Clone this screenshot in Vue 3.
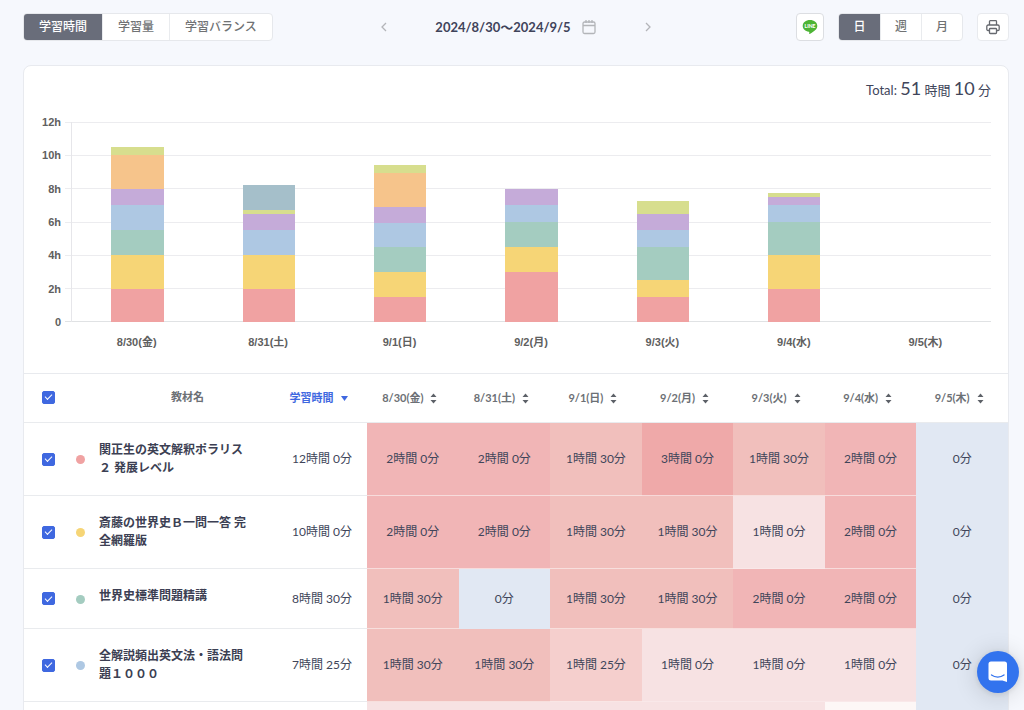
<script setup>
import { ref, computed } from 'vue'

const tabs = ['学習時間', '学習量', '学習バランス']
const periods = ['日', '週', '月']
const activeTab = ref('学習時間')
const activePeriod = ref('日')

const days = ['8/30(金)', '8/31(土)', '9/1(日)', '9/2(月)', '9/3(火)', '9/4(水)', '9/5(木)']
const ticks = ['12h', '10h', '8h', '6h', '4h', '2h', '0']
const maxMinutes = 720

const colors = ['red', 'yellow', 'green', 'blue', 'purple', 'orange', 'lime', 'teal']
const stacks = [
  [120, 120, 90, 90, 60, 120, 30, 0],
  [120, 120, 0, 90, 60, 0, 15, 90],
  [90, 90, 90, 85, 60, 120, 30, 0],
  [180, 90, 90, 60, 60, 0, 0, 0],
  [90, 60, 120, 60, 60, 0, 45, 0],
  [120, 120, 120, 60, 30, 0, 15, 0],
  [0, 0, 0, 0, 0, 0, 0, 0],
]

const bars = computed(() =>
  stacks.map((stack) =>
    stack
      .map((minutes, i) => ({ color: colors[i], height: (minutes / maxMinutes) * 100 + '%' }))
      .filter((_, i) => stack[i] > 0)
      .reverse(),
  ),
)

const allChecked = ref(true)
const rows = ref([
  { name: '関正生の英文解釈ポラリス２ 発展レベル', color: 'red', total: 720, cells: [120, 120, 90, 180, 90, 120, 0], checked: true },
  { name: '斎藤の世界史Ｂ一問一答 完全網羅版', color: 'yellow', total: 600, cells: [120, 120, 90, 90, 60, 120, 0], checked: true },
  { name: '世界史標準問題精講', color: 'green', total: 510, cells: [90, 0, 90, 90, 120, 120, 0], checked: true },
  { name: '全解説頻出英文法・語法問題１０００', color: 'blue', total: 445, cells: [90, 90, 85, 60, 60, 60, 0], checked: true },
])
const nextCells = [60, 60, 60, 60, 60, 30, 0]

function format(minutes) {
  const h = Math.floor(minutes / 60)
  const m = minutes % 60
  return h ? `${h}時間 ${m}分` : `${m}分`
}

function toggleAll() {
  rows.value.forEach((row) => (row.checked = allChecked.value))
}
</script>

<template>
  <div class="page">
    <header class="toolbar">
      <div class="segment">
        <button
          v-for="tab in tabs"
          :key="tab"
          type="button"
          :class="{ active: tab === activeTab }"
          @click="activeTab = tab"
        >{{ tab }}</button>
      </div>

      <div class="range">
        <button type="button" class="plain" aria-label="前の期間">
          <svg width="16" height="16" viewBox="0 0 16 16"><path d="M10 4 6 8l4 4" /></svg>
        </button>
        <button type="button" class="plain dates">
          <span>2024/8/30〜2024/9/5</span>
          <svg width="16" height="16" viewBox="0 0 16 16">
            <rect x="2" y="3" width="12" height="11.500" rx="1.500" />
            <path d="M2 6.500h12M5 1v3M11 1v3M8 1v3" />
          </svg>
        </button>
        <button type="button" class="plain" aria-label="次の期間">
          <svg width="16" height="16" viewBox="0 0 16 16"><path d="m6 4 4 4-4 4" /></svg>
        </button>
      </div>

      <div class="actions">
        <button type="button" class="icon-button line" aria-label="LINE">
          <svg width="16" height="16" viewBox="0 0 16 16">
            <path d="M8 1C3.900 1 .7 3.600.7 6.900c0 2.900 2.600 5.300 6.100 5.800.5.1.6.4.5.9l-.1 1c0 .4.2.5.6.3 1.900-1 4.900-2.900 6.300-4.600.8-1 1.200-2.100 1.200-3.400C15.300 3.600 12.100 1 8 1z" fill="#4db435" />
            <text x="8" y="8.500" text-anchor="middle">LINE</text>
          </svg>
        </button>
        <div class="segment periods">
          <button
            v-for="period in periods"
            :key="period"
            type="button"
            :class="{ active: period === activePeriod }"
            @click="activePeriod = period"
          >{{ period }}</button>
        </div>
        <button type="button" class="icon-button print" aria-label="印刷">
          <svg width="16" height="16" viewBox="0 0 16 16">
            <path d="M4.500 6V2.500c0-.5.300-.8.800-.8h5.400c.5 0 .8.300.8.800V6M4 11.500H3c-.7 0-1.200-.5-1.200-1.200V7.500C1.800 6.700 2.400 6 3.200 6h9.600c.8 0 1.400.7 1.400 1.500v2.800c0 .7-.5 1.200-1.200 1.200h-1" />
            <rect x="4.500" y="9.500" width="7" height="5" rx=".8" />
          </svg>
        </button>
      </div>
    </header>

    <main class="card">
      <p class="total">Total: <b>51</b> 時間 <b>10</b> 分</p>

      <section class="chart">
        <div class="axis">
          <span v-for="tick in ticks" :key="tick">{{ tick }}</span>
        </div>
        <div class="plot">
          <div class="grid-lines"><i v-for="n in 6" :key="n"></i></div>
          <div class="bars">
            <div v-for="(bar, i) in bars" :key="i" class="bar">
              <div
                v-for="part in bar"
                :key="part.color"
                :class="['part', part.color]"
                :style="{ height: part.height }"
              ></div>
            </div>
          </div>
        </div>
        <div class="labels">
          <span v-for="day in days" :key="day">{{ day }}</span>
        </div>
      </section>

      <table>
        <colgroup>
          <col class="col-check" /><col class="col-dot" /><col class="col-name" /><col class="col-time" />
          <col v-for="day in days" :key="day" />
        </colgroup>
        <thead>
          <tr>
            <th><input v-model="allChecked" type="checkbox" aria-label="すべて選択" @change="toggleAll" /></th>
            <th></th>
            <th class="name-head">教材名</th>
            <th>
              <button type="button" class="sort current">
                学習時間
                <svg width="9" height="12" viewBox="0 0 9 12"><path d="M1 4h7L4.500 9z" /></svg>
              </button>
            </th>
            <th v-for="day in days" :key="day">
              <button type="button" class="sort">
                {{ day }}
                <svg width="7" height="12" viewBox="0 0 7 12"><path d="M.5 5h6L3.500 1.500zM.5 8h6l-3 3.500z" /></svg>
              </button>
            </th>
          </tr>
        </thead>
        <tbody>
          <tr v-for="row in rows" :key="row.color">
            <td class="check"><input v-model="row.checked" type="checkbox" :aria-label="row.name" /></td>
            <td class="dot-cell"><span :class="['dot', row.color]"></span></td>
            <td class="name"><div>{{ row.name }}</div></td>
            <td>{{ format(row.total) }}</td>
            <td v-for="(cell, i) in row.cells" :key="i" :class="'heat-' + cell">{{ format(cell) }}</td>
          </tr>
          <tr class="next">
            <td colspan="4"></td>
            <td v-for="(cell, i) in nextCells" :key="i" :class="'heat-' + cell"></td>
          </tr>
        </tbody>
      </table>
    </main>

    <button type="button" class="chat" aria-label="チャットを開く">
      <svg width="20" height="22" viewBox="0 0 20 22">
        <path d="M3 .5h13.500a2.500 2.500 0 0 1 2.500 2.500v18l-4.500-1.500H3A2.500 2.500 0 0 1 .5 17V3A2.500 2.500 0 0 1 3 .5z" fill="#fff" />
        <path d="M3.500 14c3.500 2.700 9 2.700 12.500 0" fill="none" stroke="#3273ee" stroke-width="1.300" stroke-linecap="round" />
      </svg>
    </button>
  </div>
</template>

<style>
body {
  background: #f6f8fd;
}
</style>

<style scoped>
.page {
  box-sizing: border-box;
  height: 100vh;
  overflow: hidden;
  padding: 13px 15px 0 23px;
  background: #f6f8fd;
  color: #40455a;
  font-family: Lato, "Noto Sans CJK JP", sans-serif;
  font-size: 12px;
  line-height: 18px;
}

button {
  padding: 0;
  border: 0;
  background: none;
  color: inherit;
  font: inherit;
  cursor: pointer;
}

svg {
  display: block;
}

.toolbar {
  display: grid;
  grid-template-columns: 1fr auto 1fr;
  align-items: center;
  height: 28px;
  margin-bottom: 24px;
}

.segment {
  display: flex;
  justify-self: start;
  box-sizing: border-box;
  height: 28px;
  border: 1px solid #e6e8ec;
  border-radius: 4px;
  overflow: hidden;
  background: #fff;
}

.segment button {
  padding: 0 15px;
  color: #707274;
  font-weight: 500;
}

.segment button + button {
  border-left: 1px solid #e9ebee;
}

.segment .active {
  background: #696d7a;
  color: #fff;
}

.segment.periods button {
  width: 41px;
  padding: 0;
}

.range {
  display: flex;
  align-items: center;
  gap: 43px;
}

.plain svg,
.print svg {
  fill: none;
  stroke: #b3b5b9;
  stroke-width: 1.3;
}

.dates {
  display: flex;
  align-items: center;
  gap: 10px;
  color: #40435a;
  font-size: 13px;
  font-weight: 700;
}

.actions {
  display: flex;
  justify-self: end;
  gap: 14px;
}

.icon-button {
  display: grid;
  place-items: center;
  box-sizing: border-box;
  width: 32px;
  height: 28px;
  border: 1px solid #e8eaee;
  border-radius: 4px;
  background: #fff;
}

.line {
  width: 28px;
  border-color: #dcdee2;
}

.line text {
  fill: #fff;
  font: 900 5px Lato, sans-serif;
}

.print svg {
  stroke: #66696f;
}

.card {
  border: 1px solid #e8eaef;
  border-radius: 8px 8px 0 0;
  background: #fff;
}

.total {
  margin: 0;
  padding: 10px 17px 0 0;
  font-size: 13px;
  line-height: 24px;
  text-align: right;
}

.total b {
  font-size: 18px;
  font-weight: 400;
}

.chart {
  display: grid;
  grid-template-columns: 37px 1fr;
  grid-template-rows: 200px auto;
  column-gap: 10px;
  padding: 20px 17px 22px 0;
  color: #606060;
  font-family: "Liberation Sans", "Noto Sans CJK JP", sans-serif;
  font-size: 11px;
  font-weight: 700;
}

.axis {
  display: flex;
  flex-direction: column;
  justify-content: space-between;
  margin: -9px 0;
  text-align: right;
}

.plot {
  display: grid;
}

.grid-lines,
.bars {
  grid-area: 1 / 1;
}

.grid-lines {
  display: flex;
  flex-direction: column;
  margin-left: -6px;
  border-bottom: 1px solid #e0e2e4;
}

.grid-lines i {
  box-sizing: border-box;
  flex: 1;
  border-top: 1px solid #ececef;
}

.bars {
  display: grid;
  grid-template-columns: repeat(7, 1fr);
  border-left: 1px solid #e6e6ea;
}

.bar {
  display: flex;
  flex-direction: column;
  justify-content: flex-end;
  justify-self: center;
  width: 40%;
}

.labels {
  display: grid;
  grid-column: 2;
  grid-template-columns: repeat(7, 1fr);
  padding-top: 11px;
  text-align: center;
}

.red { background: #f0a2a2; }
.yellow { background: #f6d576; }
.green { background: #a4ccc0; }
.blue { background: #aec8e3; }
.purple { background: #c5abd9; }
.orange { background: #f6c48b; }
.lime { background: #d7de8e; }
.teal { background: #a5bfca; }

table {
  width: 100%;
  border-top: 1px solid #e8eaee;
  border-spacing: 0;
  table-layout: fixed;
}

.col-check { width: 49px; }
.col-dot { width: 25px; }
.col-name { width: 179px; }
.col-time { width: 90px; }

th,
td {
  box-sizing: border-box;
  padding: 0;
  border-bottom: 1px solid #e9ebee;
  text-align: center;
  vertical-align: middle;
}

th {
  height: 49px;
  padding-bottom: 2px;
  color: #6c7075;
  font-size: 11px;
}

.sort {
  display: inline-flex;
  align-items: center;
  gap: 7px;
  padding-right: 6px;
  vertical-align: middle;
}

.sort svg {
  fill: #5d6168;
}

.current {
  color: #3f68e0;
  gap: 6px;
}

.current svg {
  fill: #3f68e0;
}

.name {
  padding: 18px 25px 18px 1px;
  color: #3c3f53;
  font-weight: 700;
  text-align: left;
}

.name div {
  min-height: 23px;
}

.dot {
  display: block;
  width: 9px;
  height: 9px;
  margin: 1px auto 0 3px;
  border-radius: 50%;
}

input {
  display: grid;
  place-items: center;
  width: 13px;
  height: 13px;
  margin: 0 auto;
  border: 1px solid #3f68e0;
  border-radius: 2px;
  box-sizing: border-box;
  background: #fff;
  appearance: none;
}

input:checked {
  background: #3f68e0;
}

input:checked::before {
  content: "";
  width: 7px;
  height: 4px;
  margin-bottom: 2px;
  border: solid #fff;
  border-width: 0 0 1px 1px;
  box-sizing: border-box;
  transform: rotate(-45deg);
}

.heat-180 { background: #efa9a9; border-color: #f7d8d8; }
.heat-120 { background: #f1b5b6; border-color: #f7dcdc; }
.heat-90 { background: #f1bfbc; border-color: #f7dfdd; }
.heat-85 { background: #f5cfcd; border-color: #f9e6e5; }
.heat-60 { background: #f7e2e3; border-color: #f9e8e9; }
.heat-30 { background: #fdf7f6; border-color: #fdf7f6; }
.heat-0 { background: #e1e8f3; border-color: #e1e8f3; }

.next td {
  height: 60px;
}

.chat {
  position: fixed;
  right: 5px;
  bottom: 17px;
  display: grid;
  place-items: center;
  width: 42px;
  height: 42px;
  border-radius: 50%;
  background: #3273ee;
  box-shadow: 0 1px 6px rgba(0, 0, 0, 0.1), 0 2px 24px rgba(0, 0, 0, 0.16);
}
</style>
